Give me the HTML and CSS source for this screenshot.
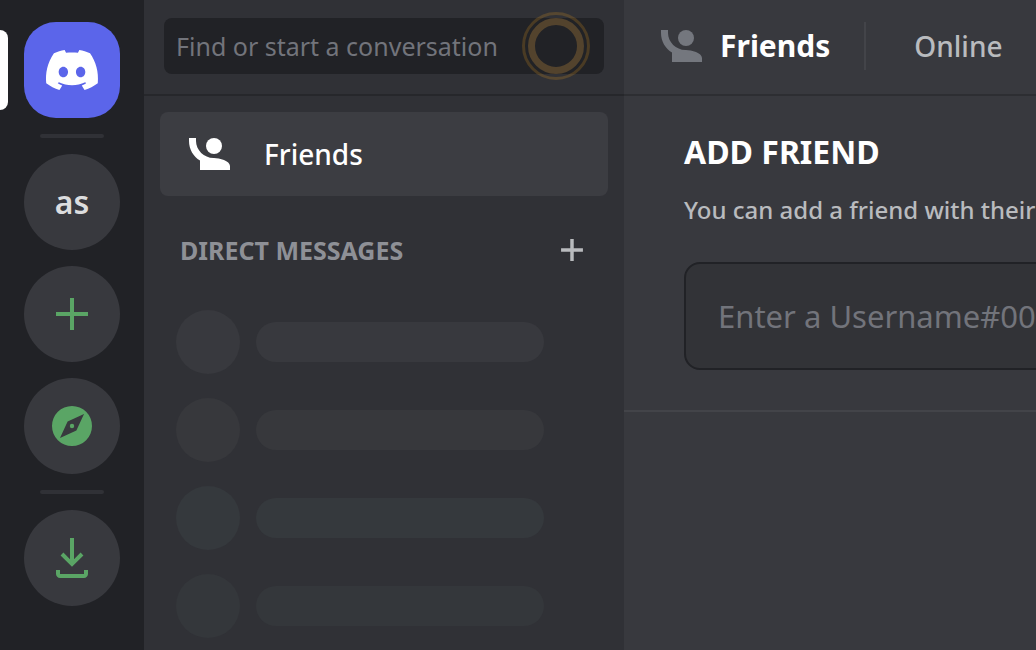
FILE: index.html
```html
<!DOCTYPE html>
<html lang="en">
<head>
<meta charset="utf-8">
<title>Friends</title>
<link rel="stylesheet" href="styles.css">
</head>
<body>
<div class="app">
  <nav class="rail" aria-label="Servers">
    <button class="server server-home" aria-label="Home">
      <svg width="56" height="40" viewBox="0 0 28 20" fill="currentColor" aria-hidden="true"><path d="M23.0212 1.67671C21.3107 0.879656 19.5079 0.318797 17.6584 0C17.4062 0.461742 17.1749 0.934541 16.9708 1.4184C15.003 1.12145 12.9974 1.12145 11.0283 1.4184C10.819 0.934541 10.589 0.461744 10.3368 0.00546311C8.48074 0.324393 6.67795 0.885118 4.96746 1.68231C1.56727 6.77853 0.649666 11.7538 1.11108 16.652C3.10102 18.1418 5.3262 19.2743 7.69177 20C8.22338 19.2743 8.69519 18.4993 9.09812 17.691C8.32996 17.3997 7.58522 17.0424 6.87684 16.6135C7.06531 16.4762 7.24726 16.3387 7.42403 16.1847C11.5911 18.1749 16.408 18.1749 20.5763 16.1847C20.7531 16.3332 20.9351 16.4762 21.1171 16.6135C20.41 17.0369 19.6639 17.3997 18.897 17.691C19.3052 18.4993 19.7718 19.2689 20.3021 19.9945C22.6677 19.2689 24.8929 18.1364 26.8828 16.6466H26.8893C27.43 10.9731 25.9665 6.04728 23.0212 1.67671ZM9.68041 13.6383C8.39754 13.6383 7.34085 12.4453 7.34085 10.994C7.34085 9.54272 8.37155 8.34973 9.68041 8.34973C10.9893 8.34973 12.0395 9.54272 12.0187 10.994C12.0187 12.4453 10.9828 13.6383 9.68041 13.6383ZM18.3161 13.6383C17.0332 13.6383 15.9765 12.4453 15.9765 10.994C15.9765 9.54272 17.0124 8.34973 18.3161 8.34973C19.6184 8.34973 20.6751 9.54272 20.6543 10.994C20.6543 12.4453 19.6184 13.6383 18.3161 13.6383Z"/></svg>
    </button>
    <div class="rail-rule"></div>
    <button class="server">as</button>
    <button class="server server-action" aria-label="Add a server">
      <svg width="48" height="48" viewBox="0 0 24 24" fill="currentColor" aria-hidden="true"><path d="M20 11H13V4H11V11H4V13H11V20H13V13H20Z"/></svg>
    </button>
    <button class="server server-action" aria-label="Explore servers">
      <svg width="48" height="48" viewBox="0 0 24 24" fill="currentColor" aria-hidden="true"><path fill-rule="evenodd" d="M12 2A10 10 0 1 0 12 22A10 10 0 1 0 12 2ZM14.19 14.19L6 18L9.81 9.81L18 6Z"/><circle cx="12" cy="12" r="1.1"/></svg>
    </button>
    <div class="rail-rule"></div>
    <button class="server server-action" aria-label="Download apps">
      <svg width="48" height="48" viewBox="0 0 24 24" fill="currentColor" aria-hidden="true"><path d="M16.293 9.293L17.707 10.707L12 16.414L6.293 10.707L7.707 9.293L11 12.586V2H13V12.586L16.293 9.293ZM18 20V18H20V20C20 21.102 19.104 22 18 22H6C4.896 22 4 21.102 4 20V18H6V20H18Z"/></svg>
    </button>
  </nav>

  <aside class="sidebar">
    <div class="search">
      <button class="search-button">Find or start a conversation</button>
      <span class="beacon"></span>
    </div>
    <div class="sidebar-body">
      <a class="nav-item" href="#friends">
        <svg width="48" height="48" viewBox="0 0 24 24" fill="currentColor" aria-hidden="true"><g transform="translate(2 4)"><path d="M0.5 0V1.5C0.5 5.65 2.71 9.28 6 11.3V16H21V14C21 11.34 15.67 10 13 10H12.75C8 10 4 6 4 1.5V0Z"/><circle cx="13" cy="4" r="4"/></g></svg>
        <span>Friends</span>
      </a>
      <div class="dm-heading">
        <h2 class="dm-title">DIRECT MESSAGES</h2>
        <button class="dm-add" aria-label="Create DM">
          <svg width="32" height="32" viewBox="0 0 24 24" fill="currentColor" aria-hidden="true"><path d="M20.2 10.7H13.3V3.8H10.7V10.7H3.8V13.3H10.7V20.2H13.3V13.3H20.2Z"/></svg>
        </button>
      </div>
      <ul class="ghosts">
        <li class="ghost"><span class="ghost-avatar"></span><span class="ghost-name"></span></li>
        <li class="ghost ghost-2"><span class="ghost-avatar"></span><span class="ghost-name"></span></li>
        <li class="ghost ghost-3"><span class="ghost-avatar"></span><span class="ghost-name"></span></li>
        <li class="ghost ghost-4"><span class="ghost-avatar"></span><span class="ghost-name"></span></li>
      </ul>
    </div>
  </aside>

  <main class="main">
    <header class="topbar">
      <svg class="topbar-icon" width="48" height="48" viewBox="0 0 24 24" fill="currentColor" aria-hidden="true"><g transform="translate(2 4)"><path d="M0.5 0V1.5C0.5 5.65 2.71 9.28 6 11.3V16H21V14C21 11.34 15.67 10 13 10H12.75C8 10 4 6 4 1.5V0Z"/><circle cx="13" cy="4" r="4"/></g></svg>
      <h1 class="topbar-title">Friends</h1>
      <div class="topbar-divider"></div>
      <button class="tab">Online</button>
    </header>
    <section class="add-friend">
      <h2 class="add-title">ADD FRIEND</h2>
      <label class="add-text" for="username">You can add a friend with their</label>
      <input class="add-input" id="username" type="text" placeholder="Enter a Username#0000">
    </section>
  </main>
</div>
</body>
</html>
```
FILE: styles.css
```css
* { box-sizing: border-box; }

body {
  margin: 0;
  font-family: "Noto Sans", "Open Sans", sans-serif;
  background: #38393e;
  overflow: hidden;
}

button {
  border: 0;
  padding: 0;
  font: inherit;
  color: inherit;
  background: none;
}

svg { display: block; flex: none; }

.app {
  display: flex;
  height: 100vh;
  overflow: hidden;
}

/* Server rail */
.rail {
  flex: none;
  width: 144px;
  padding-top: 22px;
  display: flex;
  flex-direction: column;
  align-items: center;
  gap: 16px;
  background: #212226;
}

.server {
  flex: none;
  width: 96px;
  height: 96px;
  border-radius: 50%;
  display: flex;
  align-items: center;
  justify-content: center;
  font-size: 32px;
  line-height: 40px;
  font-weight: 600;
  color: #dcddde;
  background: #38393e;
}

.server-home {
  position: relative;
  border-radius: 32px;
  color: #fff;
  background: #5b65ea;
}

.server-home::before {
  content: "";
  position: absolute;
  left: -32px;
  top: 8px;
  width: 16px;
  height: 80px;
  border-radius: 8px;
  background: #fff;
}

.server-action { color: #5aa565; }

.rail-rule {
  flex: none;
  width: 64px;
  height: 4px;
  border-radius: 2px;
  background: #303136;
}

/* Conversation sidebar */
.sidebar {
  flex: none;
  width: 480px;
  background: #303136;
}

.search {
  position: relative;
  height: 96px;
  padding: 18px 20px 20px;
  border-bottom: 2px solid #26272b;
}

.search-button {
  width: 100%;
  height: 56px;
  padding: 0 12px;
  border-radius: 8px;
  text-align: left;
  font-size: 25px;
  line-height: 32px;
  color: #72747b;
  background: #212226;
}

.beacon {
  position: absolute;
  right: 34px;
  top: 12px;
  width: 68px;
  height: 68px;
  border: 3px solid #f0a02033;
  border-radius: 50%;
}

.beacon::before {
  content: "";
  position: absolute;
  inset: 3px;
  border: 7px solid #53432d;
  border-radius: 50%;
}

.sidebar-body { padding: 16px 16px 0; }

.nav-item {
  display: flex;
  align-items: center;
  gap: 32px;
  height: 84px;
  padding: 0 24px;
  border-radius: 8px;
  font-size: 28px;
  line-height: 40px;
  font-weight: 500;
  color: #fff;
  text-decoration: none;
  background: #3c3d42;
}

.dm-heading {
  display: flex;
  align-items: center;
  justify-content: space-between;
  margin-top: 34px;
  padding: 0 20px;
}

.dm-title {
  margin: 0;
  font-size: 25px;
  line-height: 40px;
  font-weight: 700;
  color: #8e9096;
}

.dm-add { color: #b9bbbe; }

.ghosts {
  list-style: none;
  margin: 40px 0 0;
  padding: 0 16px;
  display: flex;
  flex-direction: column;
  gap: 24px;
}

.ghost {
  display: flex;
  align-items: center;
  gap: 16px;
  color: #38393e;
}

.ghost-2 { color: #37383c; }
.ghost-3 { color: #35393d; }
.ghost-4 { color: #34373b; }

.ghost-avatar {
  width: 64px;
  height: 64px;
  border-radius: 50%;
  background: currentColor;
}

.ghost-name {
  width: 288px;
  height: 40px;
  border-radius: 20px;
  background: currentColor;
}

/* Main panel */
.main {
  flex: 1;
  min-width: 0;
  overflow: hidden;
  background: #38393e;
}

.topbar {
  display: flex;
  align-items: center;
  height: 96px;
  padding: 0 32px 2px;
  border-bottom: 2px solid #2d2e32;
}

.topbar-icon { color: #74777e; }

.topbar-title {
  margin: 0 34px 0 16px;
  font-size: 30px;
  line-height: 40px;
  font-weight: 700;
  color: #fff;
}

.topbar-divider {
  width: 2px;
  height: 48px;
  background: #434449;
}

.tab {
  margin-left: 48px;
  font-size: 28px;
  line-height: 40px;
  font-weight: 500;
  color: #b9bbbe;
}

.add-friend {
  display: flex;
  flex-direction: column;
  padding: 36px 60px 40px;
  min-width: 1000px;
  border-bottom: 2px solid #434449;
}

.add-title {
  margin: 0;
  font-size: 32px;
  line-height: 40px;
  font-weight: 700;
  color: #fff;
}

.add-text {
  margin-top: 18px;
  font-size: 24px;
  line-height: 40px;
  font-weight: 500;
  white-space: nowrap;
  color: #b9bbbe;
}

.add-input {
  width: 100%;
  height: 108px;
  margin-top: 32px;
  padding: 0 32px;
  border: 2px solid #212226;
  border-radius: 16px;
  font: inherit;
  font-size: 31px;
  color: #dcddde;
  background: #323337;
}

.add-input::placeholder { color: #72747b; opacity: 1; }
```
